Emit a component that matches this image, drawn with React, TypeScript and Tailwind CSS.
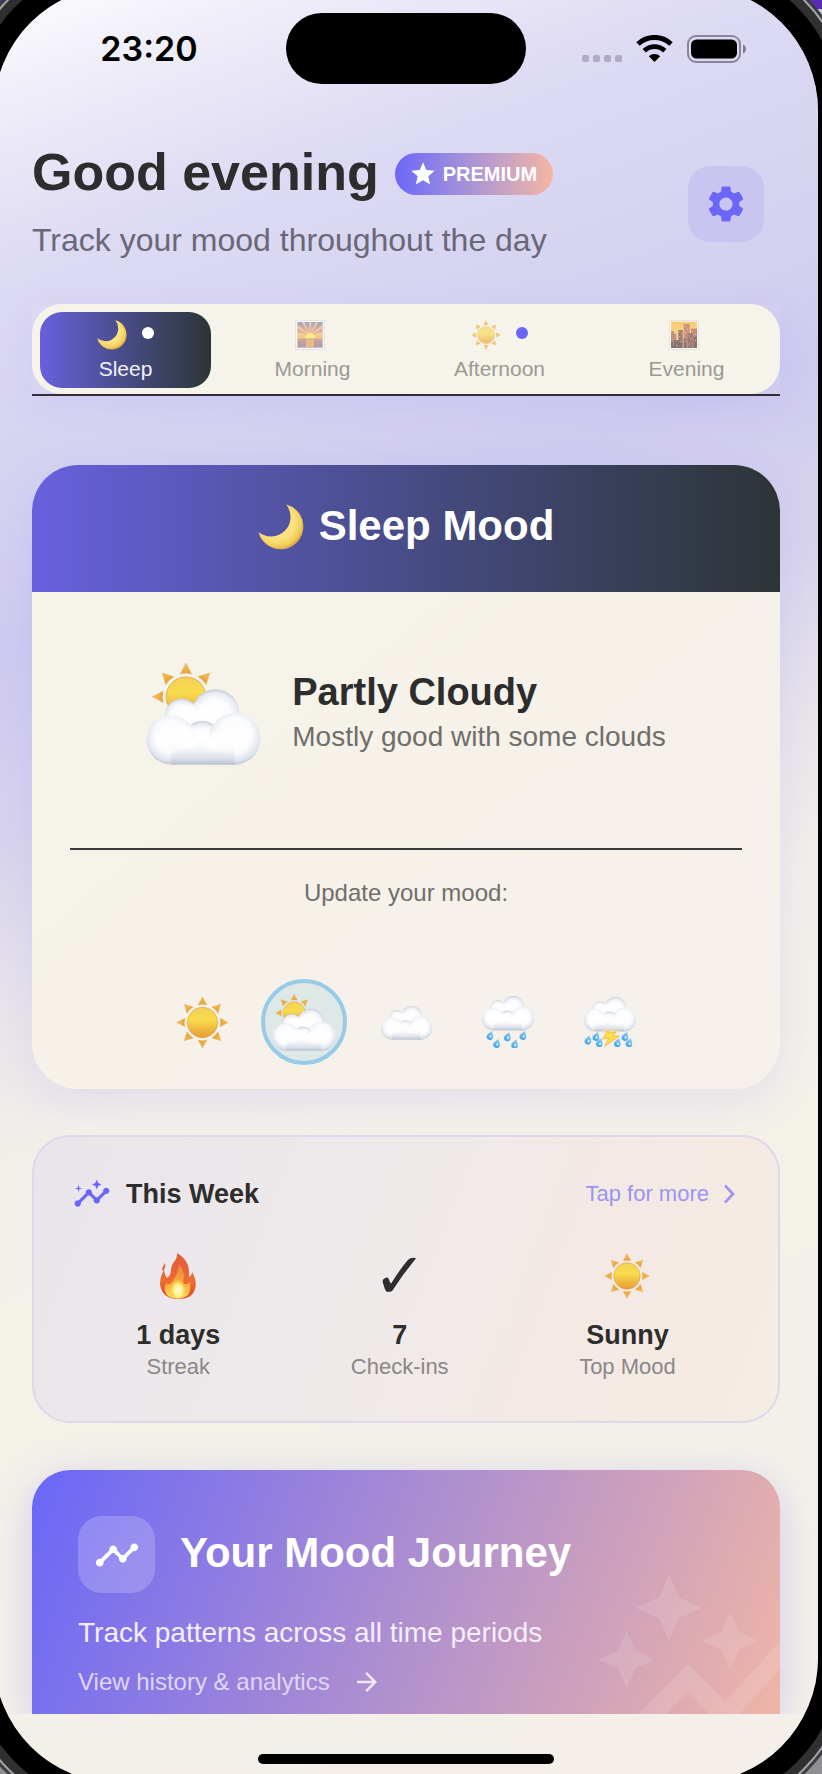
import type { ReactNode } from "react";
import { MdArrowForward, MdAutoGraph, MdInsights, MdSettings, MdStar, MdTimeline } from "react-icons/md";

/* Gradients shared by every weather drawing on the page. */
function SharedGradients() {
  return (
    <svg width="0" height="0" className="absolute" aria-hidden="true">
      <defs>
        <linearGradient id="sunDisc" x1="0" y1="0" x2="0" y2="1">
          <stop offset="0" stopColor="#f4cf57" />
          <stop offset="0.4" stopColor="#f9dc4d" />
          <stop offset="1" stopColor="#e69a35" />
        </linearGradient>
        <linearGradient id="sunRay" x1="0" y1="0" x2="0" y2="1">
          <stop offset="0" stopColor="#f3c45a" />
          <stop offset="1" stopColor="#e8a139" />
        </linearGradient>
        <radialGradient id="puff" cx="0.5" cy="0.55" r="0.55">
          <stop offset="0" stopColor="#ffffff" />
          <stop offset="0.6" stopColor="#fbfcfe" />
          <stop offset="0.86" stopColor="#e8ebf1" />
          <stop offset="1" stopColor="#c3cad6" />
        </radialGradient>
        <radialGradient id="puffLow" cx="0.5" cy="0.42" r="0.6">
          <stop offset="0" stopColor="#ffffff" />
          <stop offset="0.55" stopColor="#fafbfd" />
          <stop offset="0.85" stopColor="#dfe4ec" />
          <stop offset="1" stopColor="#b5bfcd" />
        </radialGradient>
        <linearGradient id="cloudBase" x1="0" y1="0" x2="0" y2="1">
          <stop offset="0" stopColor="#fbfcfe" />
          <stop offset="0.4" stopColor="#f2f4f8" />
          <stop offset="0.75" stopColor="#dde2ea" />
          <stop offset="1" stopColor="#b9c2cf" />
        </linearGradient>
        <radialGradient id="cloudGlow">
          <stop offset="0" stopColor="#ffffff" />
          <stop offset="0.6" stopColor="#ffffff" stopOpacity="0.75" />
          <stop offset="1" stopColor="#ffffff" stopOpacity="0" />
        </radialGradient>
        <radialGradient id="moonFill" cx="0.42" cy="0.4" r="0.62">
          <stop offset="0.6" stopColor="#fbe27e" />
          <stop offset="0.85" stopColor="#f2cf5e" />
          <stop offset="1" stopColor="#d9a441" />
        </radialGradient>
        <linearGradient id="dropFill" x1="0" y1="0" x2="0" y2="1">
          <stop offset="0" stopColor="#8accf4" />
          <stop offset="1" stopColor="#43a4e8" />
        </linearGradient>
        <linearGradient id="dawn" x1="0" y1="0" x2="0" y2="1">
          <stop offset="0" stopColor="#6f7fae" />
          <stop offset="0.35" stopColor="#d98d72" />
          <stop offset="0.62" stopColor="#f6b44e" />
          <stop offset="0.68" stopColor="#b5806e" />
          <stop offset="1" stopColor="#8a6f8c" />
        </linearGradient>
        <linearGradient id="dusk" x1="0" y1="0" x2="0" y2="1">
          <stop offset="0" stopColor="#f7b62c" />
          <stop offset="1" stopColor="#f9e08a" />
        </linearGradient>
        <linearGradient id="flameOuter" x1="0" y1="0" x2="0" y2="1">
          <stop offset="0" stopColor="#e2573a" />
          <stop offset="0.6" stopColor="#ee6c33" />
          <stop offset="1" stopColor="#e8432d" />
        </linearGradient>
        <linearGradient id="flameInner" x1="0" y1="0" x2="0" y2="1">
          <stop offset="0" stopColor="#f08445" />
          <stop offset="0.55" stopColor="#f7a83c" />
          <stop offset="1" stopColor="#fddc55" />
        </linearGradient>
        <radialGradient id="flameCore">
          <stop offset="0" stopColor="#fffde0" />
          <stop offset="0.5" stopColor="#fff38c" />
          <stop offset="1" stopColor="#fde25a" stopOpacity="0" />
        </radialGradient>
      </defs>
    </svg>
  );
}

function SunShape({ rays = [0, 45, 90, 135, 180, 225, 270, 315] }: { rays?: number[] }) {
  return (
    <g>
      {rays.map((a) => (
        <path
          key={a}
          d="M0 -78 L13 -53 Q0 -57 -13 -53Z"
          fill="url(#sunRay)"
          stroke="#e3a248"
          strokeWidth="1"
          transform={`rotate(${a})`}
        />
      ))}
      <circle r="46" fill="url(#sunDisc)" stroke="#e2a04a" strokeWidth="2" />
    </g>
  );
}

/* Occupies 344 x 228 units, starting at 0,0. */
function CloudShape() {
  return (
    <g>
      <circle cx="208" cy="71" r="71" fill="url(#puff)" />
      <circle cx="106" cy="78" r="50" fill="url(#puff)" />
      <ellipse cx="145" cy="75" rx="50" ry="36" fill="url(#cloudGlow)" />
      <circle cx="169" cy="152" r="56" fill="url(#puff)" />
      <circle cx="74" cy="153" r="74" fill="url(#puffLow)" />
      <circle cx="266" cy="150" r="78" fill="url(#puffLow)" />
      <path d="M74 150 H266 V228 H74Z" fill="url(#cloudBase)" />
      <ellipse cx="122" cy="146" rx="58" ry="42" fill="url(#cloudGlow)" />
      <ellipse cx="214" cy="156" rx="62" ry="38" fill="url(#cloudGlow)" />
      <ellipse cx="74" cy="158" rx="52" ry="46" fill="url(#cloudGlow)" opacity="0.6" />
      <ellipse cx="262" cy="154" rx="58" ry="50" fill="url(#cloudGlow)" opacity="0.6" />
    </g>
  );
}

type IconProps = { className: string };

const Sun = ({ className }: IconProps) => (
  <svg viewBox="-80 -80 160 160" className={className} aria-hidden="true">
    <SunShape />
  </svg>
);

const PartlyCloudy = ({ className }: IconProps) => (
  <svg viewBox="0 0 346 308" className={className} aria-hidden="true">
    <g transform="translate(120 102) scale(1.3)">
      <SunShape rays={[0, 45, 270, 315]} />
    </g>
    <g transform="translate(1 79)">
      <CloudShape />
    </g>
  </svg>
);

const Cloud = ({ className }: IconProps) => (
  <svg viewBox="0 -60 344 344" className={className} aria-hidden="true">
    <CloudShape />
  </svg>
);

function Drop({ x, y }: { x: number; y: number }) {
  return (
    <g transform={`translate(${x} ${y}) rotate(18)`}>
      <path d="M0 -14 C5 -6 10 -1 10 4 A10 10 0 0 1 -10 4 C-10 -1 -5 -6 0 -14Z" fill="url(#dropFill)" />
      <ellipse cx="2" cy="3" rx="3" ry="4" fill="#e3f4fd" />
    </g>
  );
}

const Rain = ({ className }: IconProps) => (
  <svg viewBox="0 0 156 156" className={className} aria-hidden="true">
    <g transform="scale(0.453)">
      <CloudShape />
    </g>
    <Drop x={25} y={118} />
    <Drop x={45} y={142} />
    <Drop x={77} y={122} />
    <Drop x={99} y={144} />
    <Drop x={124} y={118} />
  </svg>
);

const Storm = ({ className }: IconProps) => (
  <svg viewBox="0 0 156 150" className={className} aria-hidden="true">
    <g transform="scale(0.453)">
      <CloudShape />
    </g>
    <ellipse cx="80" cy="102" rx="26" ry="7" fill="#f8e08a" opacity="0.5" />
    <Drop x={13} y={129} />
    <Drop x={37} y={118} />
    <Drop x={47} y={137} />
    <Drop x={101} y={137} />
    <Drop x={124} y={118} />
    <Drop x={136} y={137} />
    <path d="M70 103 L56 126 L74 124 L62 148 L106 117 L86 118 L96 105 L80 108Z" fill="#fde047" stroke="#f2a73a" strokeWidth="2" strokeLinejoin="round" />
  </svg>
);

const Moon = ({ className }: IconProps) => (
  <svg viewBox="-1 -1 95 95" className={className} aria-hidden="true">
    <path d="M57 0 A47 47 0 1 1 0 57 A40.5 40.5 0 0 0 57 0Z" fill="url(#moonFill)" />
  </svg>
);

const Sunrise = ({ className }: IconProps) => (
  <svg viewBox="0 0 90 90" className={className} aria-hidden="true">
    <rect x="1" y="1" width="88" height="88" rx="4" fill="#fff" stroke="#c4c4ca" strokeWidth="2" />
    <rect x="7" y="6" width="76" height="77" fill="url(#dawn)" />
    <path
      d="M45 46 L7 24 V14Z M45 46 L20 6 H28Z M45 46 L42 6 H49Z M45 46 L62 6 H70Z M45 46 L83 14 V24Z M45 46 L83 38 V46Z M45 46 L7 38 V46Z"
      fill="#f9c77c"
      opacity="0.8"
    />
    <path d="M30 54 A15 15 0 0 1 60 54Z" fill="#ffe65c" />
    <path d="M33 58 H57 V83 H33Z" fill="#f3a94f" opacity="0.75" />
  </svg>
);

const City = ({ className }: IconProps) => (
  <svg viewBox="0 0 90 90" className={className} aria-hidden="true">
    <rect x="1" y="1" width="88" height="88" rx="4" fill="#fff" stroke="#c4c4ca" strokeWidth="2" />
    <rect x="6" y="5" width="78" height="79" fill="url(#dusk)" />
    <path d="M6 34 H16 V42 H22 V84 H6Z" fill="#a85a48" />
    <path d="M44 12 H62 V84 H44Z" fill="#b65f4e" />
    <path d="M66 26 H84 V84 H66Z" fill="#a5533f" />
    <path d="M14 60 H28 V30 H41 V84 H14Z M56 40 H70 V84 H56Z" fill="#6a3a3c" />
    <path d="M6 66 H40 V84 H6Z M44 56 H52 V84 H44Z M74 50 H84 V84 H74Z" fill="#4f2d34" />
    <path d="M31 36h3M36 42h3M31 50h3M48 20h3M54 28h3M48 38h3M60 48h3M64 56h3M70 34h3M77 42h3M12 72h3M22 76h3M34 66h3M48 64h3M60 72h3M78 62h3" stroke="#f8d06c" strokeWidth="3" />
  </svg>
);

const Flame = ({ className }: IconProps) => (
  <svg viewBox="0 0 36 46" className={className} aria-hidden="true">
    <path
      d="M17 0 C25 5 30 11 29 24 C31 23 32 21 32 19 C35 24 37 31 35 36 C33 43 27 46 18 46 C8 46 1 41 0 31 C0 25 2 21 4 17 C5 20 5 23 7 25 C10 23 11 20 11 16 C12 9 18 7 17 0Z"
      fill="url(#flameOuter)"
    />
    <path d="M2 17 C2 14 4 12 5 10 C6 13 4 15 4 18Z" fill="#e5603f" />
    <path
      d="M19 11 C23 16 25 21 23 30 C25 32 28 31 30 29 C31 34 30 40 27 43 C22 46 12 46 8 43 C4 39 4 34 6 30 C8 32 10 31 12 29 C16 23 19 18 19 11Z"
      fill="url(#flameInner)"
    />
    <ellipse cx="18" cy="37" rx="8" ry="11" fill="url(#flameCore)" />
  </svg>
);

const Wifi = ({ className }: IconProps) => (
  <svg viewBox="0 0 37 27" className={className} aria-hidden="true">
    <path d="M2 9 A24 24 0 0 1 35 9" fill="none" stroke="#000" strokeWidth="5" />
    <path d="M8.2 15.8 A15 15 0 0 1 28.8 15.8" fill="none" stroke="#000" strokeWidth="4.8" />
    <path d="M18.5 27 L12.8 21.2 A8.4 8.4 0 0 1 24.2 21.2Z" fill="#000" />
  </svg>
);

const Battery = ({ className }: IconProps) => (
  <svg viewBox="0 0 60 28" className={className} aria-hidden="true">
    <rect x="1" y="1" width="52" height="26" rx="8" fill="none" stroke="#000" strokeOpacity="0.38" strokeWidth="2" />
    <rect x="4" y="4.5" width="46" height="19" rx="5.5" fill="#000" />
    <path d="M56 9.5 C60 11 60 17 56 18.5Z" fill="#000" fillOpacity="0.42" />
  </svg>
);

function StatusBar() {
  return (
    <div className="grid grid-cols-[1fr_240px_1fr] items-center pt-[27px]">
      <time className="pl-[18px] text-center font-[Inter,sans-serif] text-[34px] font-semibold leading-10 text-black">23:20</time>
      <div className="h-[71px] rounded-full bg-black" />
      <div className="flex items-center justify-center gap-[14px] pr-4">
        <div className="flex gap-1 pt-[19px]">
          {[0, 1, 2, 3].map((i) => (
            <span key={i} className="h-[7px] w-[7px] rounded-xs bg-[#aeaac8]" />
          ))}
        </div>
        <Wifi className="h-[27px] w-[37px]" />
        <Battery className="h-7 w-[60px]" />
      </div>
    </div>
  );
}

function Greeting() {
  return (
    <header className="mt-[58px] flex items-center justify-between pr-4">
      <div className="pb-[6px]">
        <div className="flex items-center gap-4">
          <h1 className="text-[52px] font-bold leading-[60px] text-[#2d2d2d]">Good evening</h1>
          <span className="mt-1 flex h-[42px] items-center gap-[6px] rounded-full bg-linear-to-r from-[#6c66f8] to-[#f5b5a2] pl-[14px] pr-4 text-[20px] font-bold text-white">
            <MdStar size={28} aria-hidden="true" />
            PREMIUM
          </span>
        </div>
        <p className="mt-[18px] text-[32px] leading-10 text-[#6a6776]">Track your mood throughout the day</p>
      </div>
      <button type="button" aria-label="Settings" className="flex h-[76px] w-[76px] items-center justify-center rounded-[22px] bg-[#c9c5f0] text-[#6c66f8]">
        <MdSettings size={44} aria-hidden="true" />
      </button>
    </header>
  );
}

type Period = { label: string; icon: ReactNode; active?: boolean; logged?: boolean };

const PERIODS: Period[] = [
  { label: "Sleep", icon: <Moon className="h-[30px] w-[30px]" />, active: true, logged: true },
  { label: "Morning", icon: <Sunrise className="h-[30px] w-[30px]" /> },
  { label: "Afternoon", icon: <Sun className="h-[30px] w-[30px]" />, logged: true },
  { label: "Evening", icon: <City className="h-[30px] w-[30px]" /> },
];

function PeriodTabs() {
  return (
    <nav aria-label="Time of day" className="mt-[38px] border-b-2 border-[#2f2d38] shadow-[0_10px_36px_rgba(108,99,255,0.09)]">
      <div className="grid grid-cols-4 rounded-[30px] bg-[#f6f3ea] pb-[6px] pt-2">
        {PERIODS.map((p) => (
          <button
            key={p.label}
            type="button"
            aria-pressed={!!p.active}
            className={
              p.active
                ? "mx-2 flex flex-col items-center rounded-[22px] bg-linear-to-r from-[#6860de] to-[#2d3436] pb-[7px] pt-2 text-[#f3f1fa]"
                : "mx-2 flex flex-col items-center pb-[7px] pt-2 text-[#9b9994]"
            }
          >
            <span className="flex items-center">
              <span className={p.active ? "mr-[6px]" : "mr-[6px] opacity-65"}>{p.icon}</span>
              {p.logged && <span className={p.active ? "mb-1 ml-[9px] h-3 w-3 rounded-full bg-white" : "mb-1 ml-[9px] h-3 w-3 rounded-full bg-[#6c66f8]"} />}
            </span>
            <span className="mt-[7px] text-[21px] leading-6">{p.label}</span>
          </button>
        ))}
      </div>
    </nav>
  );
}

const MOODS: { label: string; icon: ReactNode; selected?: boolean }[] = [
  { label: "Sunny", icon: <Sun className="h-[53px] w-[53px]" /> },
  { label: "Partly cloudy", icon: <PartlyCloudy className="h-[57px] w-[64px]" />, selected: true },
  { label: "Cloudy", icon: <Cloud className="h-[51px] w-[51px]" /> },
  { label: "Rainy", icon: <Rain className="h-[52px] w-[52px]" /> },
  { label: "Stormy", icon: <Storm className="h-[50px] w-[52px]" /> },
];

function MoodCard() {
  return (
    <section className="mt-[69px] overflow-hidden rounded-[46px] bg-linear-to-br from-[#f7f4e9] via-[#f6f2ea] to-[#f5f0ea] shadow-[0_12px_44px_rgba(108,99,255,0.12)]">
      <div className="flex items-end justify-center gap-[15px] bg-linear-to-r from-[#6860de] to-[#2d3436] pb-[42px] pt-[37px]">
        <Moon className="h-[46px] w-[46px]" />
        <h2 className="text-[42px] font-bold leading-[48px] text-white">Sleep Mood</h2>
      </div>
      <div className="px-[38px] pb-6 pt-[71px]">
        <div className="flex items-center justify-center gap-[31px]">
          <PartlyCloudy className="h-[102px] w-[115px]" />
          <div className="pb-1">
            <h3 className="text-[38px] font-bold leading-[44px] text-[#2d2d2d]">Partly Cloudy</h3>
            <p className="mt-[5px] text-[28px] leading-9 text-[#706e69]">Mostly good with some clouds</p>
          </div>
        </div>
        <hr className="mt-[83px] border-t-2 border-[#3a393c]" />
        <p className="mt-[27px] text-center text-[24px] leading-8 text-[#706e69]">Update your mood:</p>
        <div className="mt-[70px] flex justify-center gap-4">
          {MOODS.map((m) => (
            <button
              key={m.label}
              type="button"
              aria-label={m.label}
              aria-pressed={!!m.selected}
              className={
                m.selected
                  ? "flex h-[86px] w-[86px] items-center justify-center rounded-full border-4 border-[#98cbe6] bg-[#dee8e6]"
                  : "flex h-[86px] w-[86px] items-center justify-center rounded-full"
              }
            >
              {m.icon}
            </button>
          ))}
        </div>
      </div>
    </section>
  );
}

const STATS: { value: string; label: string; icon: ReactNode }[] = [
  { value: "1 days", label: "Streak", icon: <Flame className="h-[46px] w-9" /> },
  { value: "7", label: "Check-ins", icon: <span className="font-['DejaVu_Sans',sans-serif] text-[64px] font-bold leading-[46px] text-[#2d2d2d]">✓</span> },
  { value: "Sunny", label: "Top Mood", icon: <Sun className="h-[46px] w-[46px]" /> },
];

function WeekCard() {
  return (
    <section className="mt-[46px] rounded-[38px] border-2 border-[#ddd8ea] bg-[linear-gradient(111deg,#e9e5ec,#efeae9_50%,#f4e9e4_75%,#f5ece3)] px-[37px] pb-10 pt-[38px]">
      <div className="flex items-center justify-between pr-[6px]">
        <div className="flex items-center gap-[15px] pl-[2px]">
          <MdInsights size={38} className="text-[#6c66f8]" aria-hidden="true" />
          <h2 className="text-[27px] font-bold leading-9 text-[#2d2d2d]">This Week</h2>
        </div>
        <a href="#week" className="flex items-center gap-[14px] text-[22px] leading-8 text-[#9c95ee]">
          Tap for more
          <svg viewBox="0 0 12 20" className="h-5 w-3" fill="none" stroke="currentColor" strokeWidth="2.6" aria-hidden="true">
            <path d="M2 1.5 L10 10 L2 18.5" />
          </svg>
        </a>
      </div>
      <div className="mt-10 flex justify-around">
        {STATS.map((s) => (
          <div key={s.label} className="flex flex-col items-center">
            <div className="flex h-[46px] items-center">{s.icon}</div>
            <strong className="mt-5 text-[27px] font-bold leading-8 text-[#2d2d2d]">{s.value}</strong>
            <span className="mt-[2px] text-[22px] leading-7 text-[#8a8786]">{s.label}</span>
          </div>
        ))}
      </div>
    </section>
  );
}

function JourneyCard() {
  return (
    <section className="relative mt-[47px] rounded-t-[38px] bg-[linear-gradient(111deg,#6a67f8,#f5b8a4_104%)] px-[46px] pb-4 pt-[46px] shadow-[0_10px_40px_rgba(108,99,255,0.26)]">
      <div className="absolute inset-0 overflow-hidden" aria-hidden="true">
        <MdAutoGraph size={226} className="absolute -right-[35px] top-[86px] text-white/12" />
      </div>
      <div className="flex items-center gap-[25px]">
        <div className="flex h-[77px] w-[77px] items-center justify-center rounded-[24px] bg-white/20 text-white">
          <MdTimeline size={46} aria-hidden="true" />
        </div>
        <h2 className="pb-1 text-[42px] font-bold leading-[48px] text-white">Your Mood Journey</h2>
      </div>
      <p className="mt-[22px] text-[28px] leading-9 text-[#f4eefb]">Track patterns across all time periods</p>
      <a href="#history" className="mt-[15px] flex items-center gap-[22px] text-[24px] leading-8 text-[#dfd6f6]">
        View history &amp; analytics
        <MdArrowForward size={30} className="text-[#efe8fa]" aria-hidden="true" />
      </a>
    </section>
  );
}

export default function App() {
  return (
    <div className="flow-root min-h-screen overflow-hidden bg-[linear-gradient(#5a2cb4_9px,#c9c9d0_9px,#8f8f94)] font-['Liberation_Sans',Arial,sans-serif]">
      <SharedGradients />
      <div className="-mb-[9px] -ml-[6px] -mt-[14px] mr-1 rounded-[125px] bg-[linear-gradient(160deg,#ffffff,#eeedf8_6%,#dddaf4_14%,#d4d1f0_26%,#cfcbef_32%,#d8d4ed_41%,#e9e5ea_49%,#f2efea_56%,#f4f1e9_64%,#f4f0e9)] shadow-[0_0_0_22px_#000,0_0_0_31px_#303030,0_0_0_33px_#a3a3a8,0_0_0_36px_#3c3c42]">
        <div className="overflow-hidden rounded-t-[125px]">
          <StatusBar />
          <main className="px-[38px]">
            <Greeting />
            <PeriodTabs />
            <MoodCard />
            <WeekCard />
            <JourneyCard />
          </main>
        </div>
        <footer className="rounded-b-[125px] pb-[19px] pt-10">
          <div className="mx-auto h-[10px] w-[36%] rounded-full bg-black" />
        </footer>
      </div>
    </div>
  );
}
